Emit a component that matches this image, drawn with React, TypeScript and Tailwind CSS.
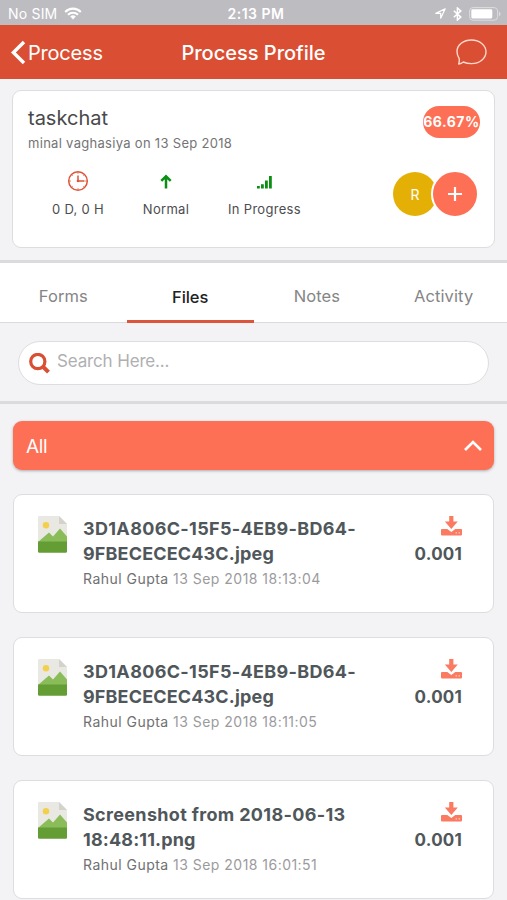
interface FileItem {
  name: string[]
  owner: string
  date: string
  size: string
}

const files: FileItem[] = [
  { name: ['3D1A806C-15F5-4EB9-BD64-', '9FBECECEC43C.jpeg'], owner: 'Rahul Gupta', date: '13 Sep 2018 18:13:04', size: '0.001' },
  { name: ['3D1A806C-15F5-4EB9-BD64-', '9FBECECEC43C.jpeg'], owner: 'Rahul Gupta', date: '13 Sep 2018 18:11:05', size: '0.001' },
  { name: ['Screenshot from 2018-06-13', '18:48:11.png'], owner: 'Rahul Gupta', date: '13 Sep 2018 16:01:51', size: '0.001' },
]

const tabs = ['Forms', 'Files', 'Notes', 'Activity']

function StatusBar() {
  return (
    <div className="grid h-[25px] grid-cols-3 items-center bg-[#bdbcc1] pt-[2px] pr-[6px] pl-2 text-white">
      <div className="flex items-center gap-[7px]">
        <span className="text-[14px] leading-5 tracking-[0.2px]">No SIM</span>
        <svg width="18" height="13" viewBox="0 0 18 13" fill="none" stroke="currentColor" strokeWidth="2.1">
          <path d="M1.2 4.9a11 11 0 0 1 15.6 0M4 7.8a7 7 0 0 1 10 0" />
          <path d="M9 12.4 6.2 9.6a4 4 0 0 1 5.6 0z" fill="currentColor" stroke="none" />
        </svg>
      </div>
      <span className="pl-[3px] text-center text-[14px] leading-5 font-semibold tracking-[0.5px]">2:13 PM</span>
      <div className="flex items-center justify-end">
        <svg className="mr-[7px]" width="11" height="11" viewBox="0 0 11 11" fill="none" stroke="currentColor" strokeWidth="1.2" strokeLinejoin="round">
          <path d="M.8 5.4 10.2.8 5.7 10.2V5.4z" />
        </svg>
        <svg className="mr-[7px]" width="9" height="14" viewBox="0 0 9 14" fill="none" stroke="currentColor" strokeWidth="1.5">
          <path d="m.8 3.8 7 6.3L4.4 13V1l3.4 2.9-7 6.3" />
        </svg>
        <svg width="32" height="14" viewBox="0 0 32 14" fill="none">
          <rect x=".6" y=".6" width="28" height="12.6" rx="3.4" stroke="#dddce0" />
          <rect x="2.3" y="2.3" width="21" height="9.2" rx="1.4" fill="#fff" />
          <path d="M30 4.7v4.5c2-.7 2-3.8 0-4.5z" fill="#dddce0" />
        </svg>
      </div>
    </div>
  )
}

function Header() {
  return (
    <div className="grid h-[54px] grid-cols-3 items-center bg-[#da4f33] text-[20px] leading-6 text-white">
      <div className="flex items-center gap-[2px] pl-[10px]">
        <svg width="16" height="25" viewBox="0 0 16 25" fill="none" stroke="currentColor" strokeWidth="3.4">
          <path d="M14 2 3.4 12.5 14 23" />
        </svg>
        <span className="pt-px tracking-[-0.2px]">Process</span>
      </div>
      <span className="pt-px text-center font-medium whitespace-nowrap">Process Profile</span>
      <div className="flex justify-end pr-5">
        <svg width="31" height="26" viewBox="0 0 31 26" fill="none" stroke="#ffd9ce" strokeWidth="1.4" strokeLinejoin="round">
          <path d="M15.500 1C7.400 1 1 6 1 12.400c0 3 .9 5.200 2.200 7.200.4 1.800.1 3.500-.5 5.400 1.700-.2 3.200-.8 4.600-2 2.200 1 5 1.600 8.200 1.600C23.500 24.600 30 19.400 30 12.800S23.500 1 15.500 1z" />
        </svg>
      </div>
    </div>
  )
}

function ProfileCard() {
  return (
    <div className="mx-3 mt-[11px] h-[158px] rounded-[9px] border border-[#dddde0] bg-white pt-[14px] pr-[14px] pl-[15px]">
      <div className="flex items-start justify-between">
        <div>
          <div className="text-[20px] leading-[26px] text-[#48494b]">taskchat</div>
          <div className="mt-[2px] text-[13px] leading-5 tracking-[0.3px] text-[#747476]">minal vaghasiya on 13 Sep 2018</div>
        </div>
        <div className="mt-px flex h-8 w-[57px] items-center justify-center rounded-full bg-[#fd7055] pb-px text-[14px] font-bold tracking-[0.5px] text-white">66.67%</div>
      </div>
      <div className="mt-4 flex justify-between">
        <div className="flex text-[13px] leading-5 tracking-[0.3px] text-[#4c4d4f]">
          <div className="flex w-[100px] flex-col items-center">
            <svg width="22" height="24" viewBox="0 0 22 24" fill="none" stroke="#dd563c" strokeWidth="1.5">
              <circle cx="11" cy="12" r="9.300" />
              <path d="M11 6.500V12h6.500" strokeWidth="1.500" />
              <circle cx="11" cy="12" r="1.300" fill="#dd563c" stroke="none" />
              <path d="M11 3v2M11 19v2M2 12h2M18 12h2M4.600 5.600l1.200 1.200M16.200 17.200l1.200 1.200M17.400 5.600l-1.200 1.200M5.800 17.200l-1.200 1.200" strokeWidth=".7" />
            </svg>
            <span className="mt-[6px]">0 D, 0 H</span>
          </div>
          <div className="flex w-[76px] flex-col items-center">
            <svg width="12" height="24" viewBox="0 0 12 24" fill="none" stroke="#0a8f12" strokeWidth="2.500">
              <path d="M6 19.500V7.500M1.300 11.800 6 7.300l4.700 4.500" />
            </svg>
            <span className="mt-[6px]">Normal</span>
          </div>
          <div className="flex w-[121px] flex-col items-center">
            <svg width="15" height="24" viewBox="0 0 15 24" fill="#0a8f12">
              <path d="M0 17h2.800v2.500H0zM4 15.200h2.800v4.300H4zM8 11.500h2.800v8H8zM12 7h2.800v12.500H12z" />
            </svg>
            <span className="mt-[6px]">In Progress</span>
          </div>
        </div>
        <div className="mr-px flex items-center">
          <div className="flex size-11 items-center justify-center rounded-full bg-[#e5b006] text-[14px] text-white">R</div>
          <div className="-ml-[6px] flex size-12 items-center justify-center rounded-full border-2 border-white bg-[#fd7055]">
            <svg width="14" height="14" viewBox="0 0 14 14" stroke="#fff" strokeWidth="2.200">
              <path d="M7 0v14M0 7h14" />
            </svg>
          </div>
        </div>
      </div>
    </div>
  )
}

function Tabs() {
  return (
    <div className="grid h-[63px] grid-cols-4 border-t-[3px] border-b border-[#dbdbdd] bg-white text-[16.5px] leading-6">
      {tabs.map((tab) =>
        tab === 'Files' ? (
          <div key={tab} className="-mb-px border-b-[3px] border-[#dc5439] pt-[22px] text-center font-medium tracking-[-0.1px] text-[#222]">{tab}</div>
        ) : (
          <div key={tab} className="pt-[21px] text-center tracking-[0.1px] text-[#858586]">{tab}</div>
        )
      )}
    </div>
  )
}

function FileIcon() {
  return (
    <svg width="29" height="37" viewBox="0 0 29 37">
      <path d="M0 1.200Q0 0 1.200 0H21l8 8v18H0z" fill="#e9e8e2" />
      <path d="M21 0v8h8z" fill="#d3d2cd" />
      <circle cx="8" cy="9.300" r="3.200" fill="#f4cf4b" />
      <path d="m0 26 11-9.500 4 4L22 12.500l7 8V27H0z" fill="#8abd59" />
      <path d="M0 25.500h29v10q0 1.300-1.300 1.300H1.300Q0 36.800 0 35.500z" fill="#659d35" />
    </svg>
  )
}

function DownloadIcon() {
  return (
    <svg className="mr-[-1px]" width="21" height="20" viewBox="0 0 21 20" fill="#fa7b62">
      <path d="M8.200 0h4.200v5.500h4.400L10.300 13 3.800 5.500h4.400z" />
      <path d="M1 13h5.300l4 3 4-3H20q1 0 1 1v4.500q0 1-1 1H1q-1 0-1-1V14q0-1 1-1z" />
      <path d="M14.600 16.200h1.300v1.200h-1.300zM17.600 16.200h1.300v1.200h-1.300z" fill="#ffd5cb" />
    </svg>
  )
}

function FileCard({ file }: { file: FileItem }) {
  return (
    <div className="flex h-[119px] rounded-[9px] border border-[#dddde0] bg-white pt-[21px] pr-[32px] pl-[24px]">
      <FileIcon />
      <div className="ml-4 flex-1 pt-px">
        {file.name.map((line, i) => (
          <div
            key={line}
            className={`text-[18px] leading-[24.5px] font-bold whitespace-nowrap text-[#50575b] ${i === 0 ? 'tracking-[0.33px]' : 'tracking-[0.15px]'}`}
          >
            {line}
          </div>
        ))}
        <div className="mt-[3px] text-[14px] leading-5 tracking-[0.47px] text-[#6f7072]">
          {file.owner} <span className="text-[#9b9b9d]">{file.date}</span>
        </div>
      </div>
      <div className="flex flex-col items-end">
        <DownloadIcon />
        <span className="mt-[6px] mr-[-1px] text-[17px] leading-6 font-bold tracking-[0.2px] text-[#50575b]">{file.size}</span>
      </div>
    </div>
  )
}

export default function App() {
  return (
    <div className="h-[900px] w-full overflow-hidden bg-[#f3f2f5] font-['Inter',sans-serif]">
      <StatusBar />
      <Header />
      <ProfileCard />
      <div className="mt-3">
        <Tabs />
      </div>
      <div className="h-[81px] border-b-[3px] border-[#dbdbdd] px-[18px] pt-[18px]">
        <div className="flex h-11 items-center rounded-full border border-[#dddde0] bg-white pl-[10px]">
          <svg width="21" height="21" viewBox="0 0 21 21" fill="none" stroke="#d94f33">
            <circle cx="8.800" cy="8.500" r="7.100" strokeWidth="3.200" />
            <path d="m13.800 13.500 5.700 5.700" strokeWidth="4" />
          </svg>
          <span className="ml-[7px] pb-[5px] text-[17px] leading-6 tracking-[-0.15px] text-[#b0b0b2]">Search Here...</span>
        </div>
      </div>
      <div className="mx-[13px] mt-[17px] flex h-[49px] items-center justify-between rounded-[9px] bg-[#fd7055] pr-3 pl-[13px] text-white shadow-[0_1px_3px_rgba(0,0,0,0.3)]">
        <span className="pt-[3px] text-[19px] tracking-[-0.3px]">All</span>
        <svg width="18" height="11" viewBox="0 0 18 11" fill="none" stroke="currentColor" strokeWidth="2.600">
          <path d="m1 10 8-8 8 8" />
        </svg>
      </div>
      <div className="mx-[13px] mt-6 flex flex-col gap-6">
        {files.map((file) => (
          <FileCard key={file.date} file={file} />
        ))}
      </div>
    </div>
  )
}
